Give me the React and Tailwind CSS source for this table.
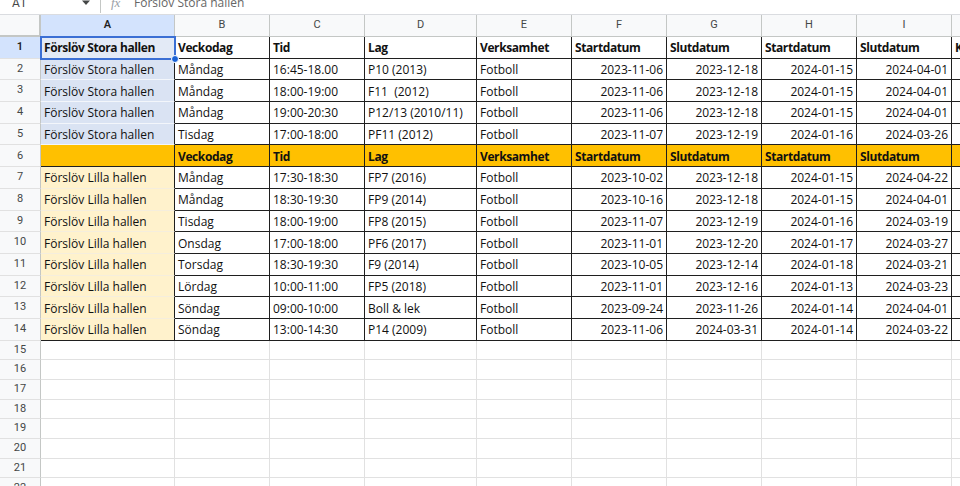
import React from "react";

const COLS = [
  { k: "A", w: "w-[134px]" },
  { k: "B", w: "w-[95px]" },
  { k: "C", w: "w-[95px]" },
  { k: "D", w: "w-[112px]" },
  { k: "E", w: "w-[95px]" },
  { k: "F", w: "w-[95px]" },
  { k: "G", w: "w-[95px]" },
  { k: "H", w: "w-[95px]" },
  { k: "I", w: "w-[95px]" },
  { k: "J", w: "w-[95px]" },
];

const HEAD = ["Veckodag", "Tid", "Lag", "Verksamhet", "Startdatum", "Slutdatum", "Startdatum", "Slutdatum"];

const STORA = "Förslöv Stora hallen";
const LILLA = "Förslöv Lilla hallen";

const DATA = [
  { t: "head1", cells: [STORA, ...HEAD, "Kommentar"] },
  { t: "blue", cells: [STORA, "Måndag", "16:45-18.00", "P10 (2013)", "Fotboll", "2023-11-06", "2023-12-18", "2024-01-15", "2024-04-01", ""] },
  { t: "blue", cells: [STORA, "Måndag", "18:00-19:00", "F11  (2012)", "Fotboll", "2023-11-06", "2023-12-18", "2024-01-15", "2024-04-01", ""] },
  { t: "blue", cells: [STORA, "Måndag", "19:00-20:30", "P12/13 (2010/11)", "Fotboll", "2023-11-06", "2023-12-18", "2024-01-15", "2024-04-01", ""] },
  { t: "blue", cells: [STORA, "Tisdag", "17:00-18:00", "PF11 (2012)", "Fotboll", "2023-11-07", "2023-12-19", "2024-01-16", "2024-03-26", ""] },
  { t: "orange", cells: ["", ...HEAD, ""] },
  { t: "yellow", cells: [LILLA, "Måndag", "17:30-18:30", "FP7 (2016)", "Fotboll", "2023-10-02", "2023-12-18", "2024-01-15", "2024-04-22", ""] },
  { t: "yellow", cells: [LILLA, "Måndag", "18:30-19:30", "FP9 (2014)", "Fotboll", "2023-10-16", "2023-12-18", "2024-01-15", "2024-04-01", ""] },
  { t: "yellow", cells: [LILLA, "Tisdag", "18:00-19:00", "FP8 (2015)", "Fotboll", "2023-11-07", "2023-12-19", "2024-01-16", "2024-03-19", ""] },
  { t: "yellow", cells: [LILLA, "Onsdag", "17:00-18:00", "PF6 (2017)", "Fotboll", "2023-11-01", "2023-12-20", "2024-01-17", "2024-03-27", ""] },
  { t: "yellow", cells: [LILLA, "Torsdag", "18:30-19:30", "F9 (2014)", "Fotboll", "2023-10-05", "2023-12-14", "2024-01-18", "2024-03-21", ""] },
  { t: "yellow", cells: [LILLA, "Lördag", "10:00-11:00", "FP5 (2018)", "Fotboll", "2023-11-01", "2023-12-16", "2024-01-13", "2024-03-23", ""] },
  { t: "yellow", cells: [LILLA, "Söndag", "09:00-10:00", "Boll & lek", "Fotboll", "2023-09-24", "2023-11-26", "2024-01-14", "2024-04-01", ""] },
  { t: "yellow", cells: [LILLA, "Söndag", "13:00-14:30", "P14 (2009)", "Fotboll", "2023-11-06", "2024-03-31", "2024-01-14", "2024-03-22", ""], last: true },
];

const isDate = (s) => /^\d{4}-\d{2}-\d{2}$/.test(s);

function RowNum({ n, tall, active }) {
  return (
    <div
      className={`w-[41px] shrink-0 flex items-center justify-center border-r border-b border-r-[#c4c7c5] border-b-[#e1e1e1] text-[11px] ${
        active ? "bg-[#d3e3fd] font-semibold text-[#1f1f1f]" : "bg-[#f8f9fa] text-[#444746]"
      } ${tall ? "h-[21.7px]" : "h-[19.7px]"}`}
      style={{ fontFamily: "Roboto, Arial, sans-serif" }}
    >
      {n}
    </div>
  );
}

function DataRow({ row, idx }) {
  return (
    <div className="flex w-max h-[21.7px]">
      <RowNum n={idx + 1} tall active={idx === 0} />
      {row.cells.map((c, i) => {
        let bg = "bg-white";
        let bb = "border-b-[#1f1f1f]";
        if (row.t === "orange") bg = "bg-[#ffc000]";
        if (i === 0) {
          if (row.t === "head1") {
            bg = "bg-[#e3eaf6]";
            bb = "border-b-[#f3f6fb]";
          } else if (row.t === "blue") {
            bg = "bg-[#dae3f3]";
            bb = "border-b-[#f3f6fb]";
          } else if (row.t === "yellow") {
            bg = "bg-[#fff2cc]";
            bb = row.last ? "border-b-[#1f1f1f]" : "border-b-[#f5eedd]";
          } else if (row.t === "orange") {
            bb = "border-b-[#1f1f1f]";
          }
        }
        const bold = row.t === "head1" || row.t === "orange";
        const right = isDate(c);
        const br = i === 9 ? "border-r-[#e1e1e1]" : "border-r-[#1f1f1f]";
        return (
          <div
            key={i}
            className={`${COLS[i].w} shrink-0 relative flex items-center overflow-hidden whitespace-pre border-r border-b ${br} ${bb} ${bg} px-[3px] pt-[2px] text-[12px] text-[#111] ${
              right ? "justify-end" : "justify-start"
            } ${bold ? "font-bold tracking-[-0.4px]" : ""}`}
            style={{ fontFamily: '"Open Sans", "Liberation Sans", sans-serif' }}
          >
            {c}
          </div>
        );
      })}
    </div>
  );
}

function EmptyRow({ n }) {
  return (
    <div className="flex w-max h-[19.7px]">
      <RowNum n={n} />
      {COLS.map((c, i) => (
        <div key={i} className={`${c.w} shrink-0 border-r border-b border-[#e1e1e1] bg-white`} />
      ))}
    </div>
  );
}

export default function App() {
  return (
    <div className="w-[960px] h-[486px] overflow-hidden bg-white relative">
      {/* formula bar (cropped) */}
      <div className="h-[15px] overflow-hidden border-b border-[#dadce0] bg-white">
        <div
          className="h-[28px] -mt-[11px] flex items-center text-[12px] text-[#444746]"
          style={{ fontFamily: "Roboto, Arial, sans-serif" }}
        >
          <div className="w-[100px] flex items-center pl-[12px]">
            <span className="w-[68px]">A1</span>
            <svg width="10" height="6" viewBox="0 0 10 6" className="ml-[1px]">
              <path d="M1 0.5 L5 5 L9 0.5 Z" fill="#444746" />
            </svg>
          </div>
          <div className="w-px h-[20px] bg-[#c4c7c5]" />
          <span
            className="ml-[10px] w-[23px] italic text-[#9aa0a6] text-[13px]"
            style={{ fontFamily: '"Liberation Serif", serif' }}
          >
            fx
          </span>
          <span className="text-[#666]" style={{ fontFamily: '"Open Sans", sans-serif' }}>
            Förslöv Stora hallen
          </span>
        </div>
      </div>
      {/* column header */}
      <div className="flex w-max h-[22px]" style={{ fontFamily: "Roboto, Arial, sans-serif" }}>
        <div className="w-[41px] shrink-0 bg-[#f8f9fa] border-r-2 border-b-2 border-[#c4c7c5]" />
        {COLS.map((c, i) => (
          <div
            key={c.k}
            className={`${c.w} shrink-0 flex items-center justify-center border-r border-b border-r-[#c4c7c5] border-b-[#c4c7c5] text-[11px] ${
              i === 0 ? "bg-[#d3e3fd] text-[#1f1f1f] font-semibold" : "bg-[#f8f9fa] text-[#444746]"
            }`}
          >
            {c.k}
          </div>
        ))}
      </div>
      {/* data */}
      <div className="relative">
        {DATA.map((r, i) => (
          <DataRow key={i} row={r} idx={i} />
        ))}
        {[15, 16, 17, 18, 19, 20, 21, 22].map((n) => (
          <EmptyRow key={n} n={n} />
        ))}
        {/* selection on A1 */}
        <div className="absolute left-[40px] top-[-1px] w-[136px] h-[23.7px] border-2 border-[#3b6fd4] pointer-events-none" />
        <div className="absolute left-[171px] top-[18px] w-[8px] h-[8px] rounded-full bg-[#1a62d6] border border-white pointer-events-none" />
      </div>
    </div>
  );
}
